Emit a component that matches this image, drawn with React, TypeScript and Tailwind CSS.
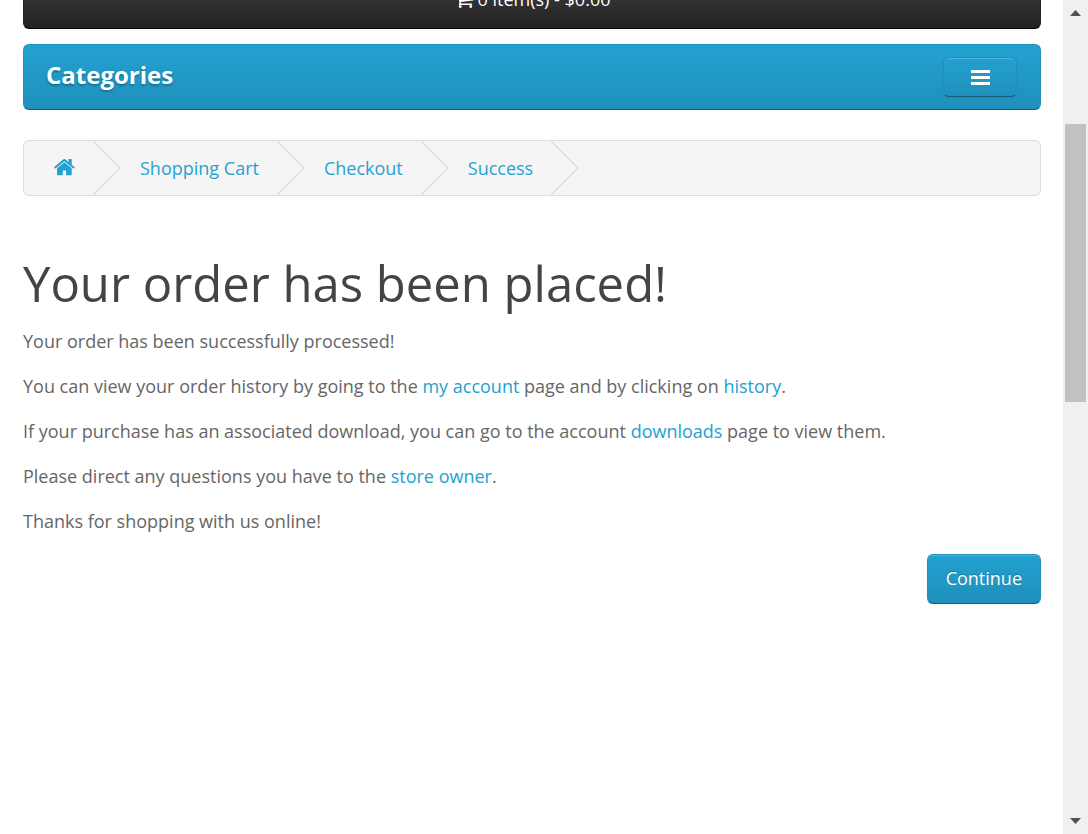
import type { ReactNode } from "react";

function CartIcon() {
  return (
    <svg viewBox="64 128 1664 1536" className="h-[18px] w-5 fill-current" aria-hidden="true">
      <path d="M704 1536q0 52-38 90t-90 38-90-38-38-90 38-90 90-38 90 38 38 90zm896 0q0 52-38 90t-90 38-90-38-38-90 38-90 90-38 90 38 38 90zm128-1088v512q0 24-16.5 42.5t-40.5 21.5l-1044 122q13 60 13 70 0 16-24 64h920q26 0 45 19t19 45-19 45-45 19h-1024q-26 0-45-19t-19-45q0-11 8-31.5t16-36 21.5-40 15.5-29.5l-177-823h-204q-26 0-45-19t-19-45 19-45 45-19h256q16 0 28.5 6.5t19.5 15.5 13 24.5 8 26 5.5 29.5 4.5 26h1201q26 0 45 19t19 45z" />
    </svg>
  );
}

function HomeIcon() {
  return (
    <svg viewBox="0 192 1728 1536" className="block h-5 w-[22px] fill-current" aria-hidden="true">
      <path d="M1472 992v480q0 26-19 45t-45 19h-384v-384h-256v384h-384q-26 0-45-19t-19-45v-480q0-1 .5-3t.5-3l575-474 575 474q1 2 1 6zm223-69l-62 74q-8 9-21 11h-3q-13 0-21-7l-692-577-692 577q-12 8-24 7-13-2-21-11l-62-74q-8-10-7-23.5t11-21.5l719-599q32-26 76-26t76 26l244 204v-195q0-14 9-23t23-9h192q14 0 23 9t9 23v408l219 182q10 8 11 21.5t-7 23.5z" />
    </svg>
  );
}

function Chevron() {
  return (
    <svg viewBox="0 0 28 54" className="h-[54px] w-7 shrink-0 fill-none stroke-[#dddddd] stroke-[1.4]" aria-hidden="true">
      <path d="M0 0L27 27L0 54" />
    </svg>
  );
}

function Crumb({ label, children }: { label?: string; children: ReactNode }) {
  return (
    <li className="flex items-center">
      <a href="#" aria-label={label} className="pr-[18px] pl-[19px] text-[#23a1d1] [text-shadow:0_1px_0_#fff]">
        {children}
      </a>
      <Chevron />
    </li>
  );
}

function TextLink({ children }: { children: ReactNode }) {
  return (
    <a href="#" className="text-[#23a1d1] hover:underline">
      {children}
    </a>
  );
}

function ScrollTrack() {
  return (
    <div className="sticky top-0 flex h-screen w-[25px] shrink-0 flex-col items-center bg-[#f0f0f0]" aria-hidden="true">
      <svg viewBox="0 0 25 25" className="size-[25px] fill-[#505050]">
        <path d="M7 16L12.5 10L18 16Z" />
      </svg>
      <div className="flex w-full flex-1 flex-col px-0.5">
        <div className="basis-[99px]" />
        <div className="basis-[278px] bg-[#c1c1c1]" />
      </div>
      <svg viewBox="0 0 25 25" className="size-[25px] fill-[#505050]">
        <path d="M7 9H18L12.5 15Z" />
      </svg>
    </div>
  );
}

export default function App() {
  return (
    <div className="flex min-h-screen bg-white font-['Open_Sans',sans-serif] text-lg leading-[27px] text-[#666666]">
      <div className="min-w-0 flex-1 overflow-hidden pr-[22px] pl-[23px]">
        <header>
          <button
            type="button"
            className="-mt-[31px] flex h-[60px] w-full items-center justify-center gap-1 rounded-md border border-[#222222] border-b-black bg-linear-to-b from-[#444444] to-[#222222] text-white [text-shadow:0_-1px_0_rgba(0,0,0,0.25)]"
          >
            <CartIcon />
            <span>0 item(s) - $0.00</span>
          </button>
        </header>

        <nav
          aria-label="Categories"
          className="mt-[15px] flex h-[66px] items-center justify-between rounded-md border border-[#1f90bb] border-b-[#145e7a] bg-linear-to-b from-[#23a1d1] to-[#1f90bb] pr-[23px] pl-[22px]"
        >
          <span className="pb-1 text-2xl font-bold text-white [text-shadow:0_2px_2px_rgba(0,0,0,0.25)]">Categories</span>
          <button
            type="button"
            aria-label="Toggle categories"
            className="flex h-10 w-[74px] items-center justify-center rounded-md border border-[#1f90bb] border-b-[#145e7a] bg-linear-to-b from-[#23a1d1] to-[#1f90bb] text-white shadow-[inset_0_1px_0_rgba(255,255,255,0.2),0_1px_2px_rgba(0,0,0,0.05)]"
          >
            <svg viewBox="0 0 19 15" className="h-[15px] w-[19px] fill-current" aria-hidden="true">
              <path d="M0 0H19V3H0ZM0 6H19V9H0ZM0 12H19V15H0Z" />
            </svg>
          </button>
        </nav>

        <ul className="mt-[30px] flex h-14 overflow-hidden rounded-md border border-[#dddddd] bg-[#f5f5f5] pl-2.5">
          <Crumb label="Home">
            <HomeIcon />
          </Crumb>
          <Crumb>Shopping Cart</Crumb>
          <Crumb>Checkout</Crumb>
          <Crumb>Success</Crumb>
        </ul>

        <main className="pt-[60px]">
          <h1 className="text-[49px] leading-[54px] text-[#444444]">Your order has been placed!</h1>
          <div className="mt-[18px] space-y-[18px]">
            <p>Your order has been successfully processed!</p>
            <p>
              You can view your order history by going to the <TextLink>my account</TextLink> page and by clicking on{" "}
              <TextLink>history</TextLink>.
            </p>
            <p>
              If your purchase has an associated download, you can go to the account <TextLink>downloads</TextLink> page
              to view them.
            </p>
            <p>
              Please direct any questions you have to the <TextLink>store owner</TextLink>.
            </p>
            <p>Thanks for shopping with us online!</p>
          </div>
          <div className="mt-[19px] flex justify-end pb-12">
            <a
              href="#"
              className="flex h-[50px] items-center rounded-md border border-[#1f90bb] border-b-[#145e7a] bg-linear-to-b from-[#23a1d1] to-[#1f90bb] px-[18px] pb-0.5 text-white shadow-[inset_0_1px_0_rgba(255,255,255,0.2),0_1px_2px_rgba(0,0,0,0.05)] [text-shadow:0_-1px_0_rgba(0,0,0,0.25)]"
            >
              Continue
            </a>
          </div>
        </main>
      </div>
      <ScrollTrack />
    </div>
  );
}
